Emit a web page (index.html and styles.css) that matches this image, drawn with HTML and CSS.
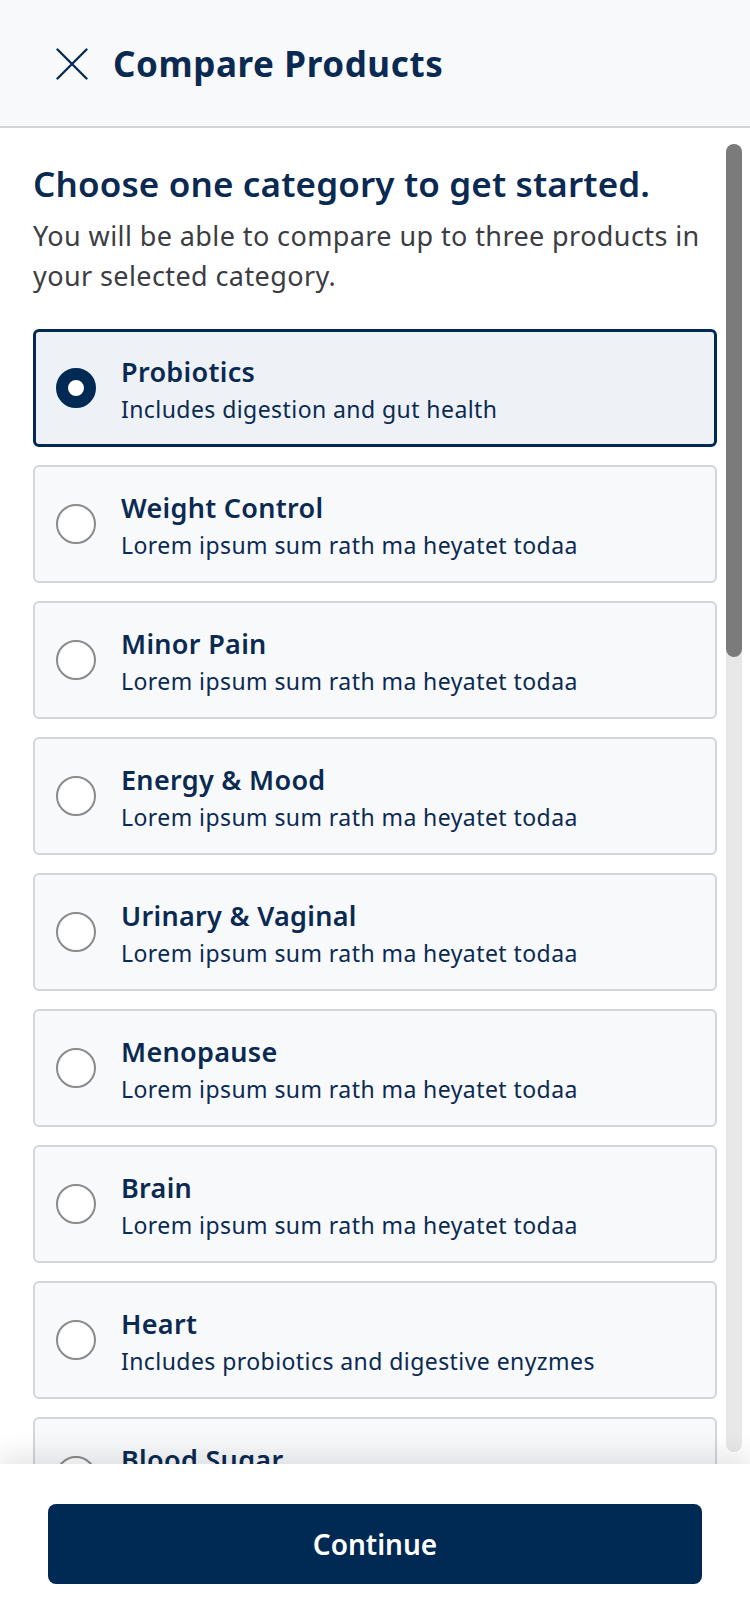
FILE: index.html
```html
<!DOCTYPE html>
<html lang="en">
<head>
<meta charset="utf-8">
<title>Compare Products</title>
<link rel="stylesheet" href="styles.css">
</head>
<body>
<div class="app">
  <header class="header">
    <svg class="close" width="32" height="32" viewBox="0 0 32 32" aria-hidden="true">
      <path d="M1.5 1.5 L30.5 30.5 M30.5 1.5 L1.5 30.5" stroke="#0b2a52" stroke-width="2.4" stroke-linecap="round" fill="none"/>
    </svg>
    <h1 class="title">Compare Products</h1>
  </header>
  <main class="main">
    <div class="content">
      <h2 class="heading">Choose one category to get started.</h2>
      <p class="intro">You will be able to compare up to three products in your selected category.</p>
      <ul class="options">
        <li class="option selected"><span class="radio"></span><div class="text"><div class="name">Probiotics</div><div class="desc">Includes digestion and gut health</div></div></li>
        <li class="option"><span class="radio"></span><div class="text"><div class="name">Weight Control</div><div class="desc">Lorem ipsum sum rath ma heyatet todaa</div></div></li>
        <li class="option"><span class="radio"></span><div class="text"><div class="name">Minor Pain</div><div class="desc">Lorem ipsum sum rath ma heyatet todaa</div></div></li>
        <li class="option"><span class="radio"></span><div class="text"><div class="name">Energy &amp; Mood</div><div class="desc">Lorem ipsum sum rath ma heyatet todaa</div></div></li>
        <li class="option"><span class="radio"></span><div class="text"><div class="name">Urinary &amp; Vaginal</div><div class="desc">Lorem ipsum sum rath ma heyatet todaa</div></div></li>
        <li class="option"><span class="radio"></span><div class="text"><div class="name">Menopause</div><div class="desc">Lorem ipsum sum rath ma heyatet todaa</div></div></li>
        <li class="option"><span class="radio"></span><div class="text"><div class="name">Brain</div><div class="desc">Lorem ipsum sum rath ma heyatet todaa</div></div></li>
        <li class="option"><span class="radio"></span><div class="text"><div class="name">Heart</div><div class="desc">Includes probiotics and digestive enyzmes</div></div></li>
        <li class="option"><span class="radio"></span><div class="text"><div class="name">Blood Sugar</div><div class="desc">Lorem ipsum sum rath ma heyatet todaa</div></div></li>
      </ul>
    </div>
    <div class="scrollbar"><div class="thumb"></div></div>
  </main>
  <footer class="footer">
    <button class="continue">Continue</button>
  </footer>
</div>
</body>
</html>
```
FILE: styles.css
```css
* { box-sizing: border-box; }
html, body {
  margin: 0;
  padding: 0;
  background: #ffffff;
}
body {
  font-family: "Noto Sans", "Open Sans", sans-serif;
  color: #0b2a52;
}
.app {
  width: 750px;
  height: 1624px;
  display: flex;
  flex-direction: column;
  overflow: hidden;
}
.header {
  flex: 0 0 128px;
  background: #f8f9fb;
  border-bottom: 2px solid #d3d4d7;
  display: flex;
  align-items: center;
  padding-left: 56px;
  padding-top: 2px;
}
.close {
  display: block;
  width: 32px;
  height: 32px;
}
.title {
  margin: 0 0 0 25px;
  font-size: 35px;
  font-weight: 700;
  line-height: 44px;
  letter-spacing: 0.6px;
  color: #0b2a52;
}
.main {
  flex: 1 1 auto;
  display: flex;
  min-height: 0;
  overflow: hidden;
}
.content {
  flex: 1 1 auto;
  padding: 34px 9px 0 33px;
}
.heading {
  margin: 0;
  font-size: 35px;
  font-weight: 600;
  line-height: 44px;
  color: #0b2a52;
  letter-spacing: 0.15px;
}
.intro {
  margin: 10px 0 0;
  font-size: 27px;
  line-height: 40px;
  letter-spacing: 0.4px;
  color: #3b3d42;
}
.options {
  list-style: none;
  margin: 33px 0 0;
  padding: 0;
  display: flex;
  flex-direction: column;
  gap: 18px;
}
.option {
  height: 118px;
  flex: 0 0 118px;
  border: 2px solid #d3d5d9;
  border-radius: 6px;
  background: #f8f9fb;
  display: flex;
  align-items: center;
  padding-left: 21px;
}
.option.selected {
  border: 3px solid #002a54;
  background: #eef2f7;
  padding-left: 20px;
}
.radio {
  flex: 0 0 40px;
  width: 40px;
  height: 40px;
  border-radius: 50%;
  border: 2px solid #8a8a8c;
  background: #ffffff;
}
.selected .radio {
  border: 12px solid #002a54;
}
.text {
  margin-left: 25px;
  padding-top: 4px;
  display: flex;
  flex-direction: column;
}
.name {
  font-size: 27px;
  font-weight: 600;
  line-height: 34px;
  letter-spacing: 0.3px;
  color: #0b2a52;
}
.desc {
  margin-top: 4px;
  font-size: 23px;
  line-height: 32px;
  letter-spacing: 0.43px;
  color: #0b2a52;
}
.scrollbar {
  flex: 0 0 16px;
  margin: 16px 8px 12px 0;
  background: #e8e8e8;
  border-radius: 8px;
}
.thumb {
  height: 513px;
  background: #7b7b7b;
  border-radius: 8px;
}
.footer {
  flex: 0 0 160px;
  position: relative;
  z-index: 1;
  background: #ffffff;
  box-shadow: 0 -10px 24px rgba(0, 0, 0, 0.10);
  padding: 40px 48px 0 48px;
}
.continue {
  display: block;
  width: 100%;
  height: 80px;
  border: none;
  border-radius: 8px;
  background: #002a54;
  color: #ffffff;
  font-family: "Noto Sans", "Open Sans", sans-serif;
  font-size: 28px;
  font-weight: 600;
}
```
